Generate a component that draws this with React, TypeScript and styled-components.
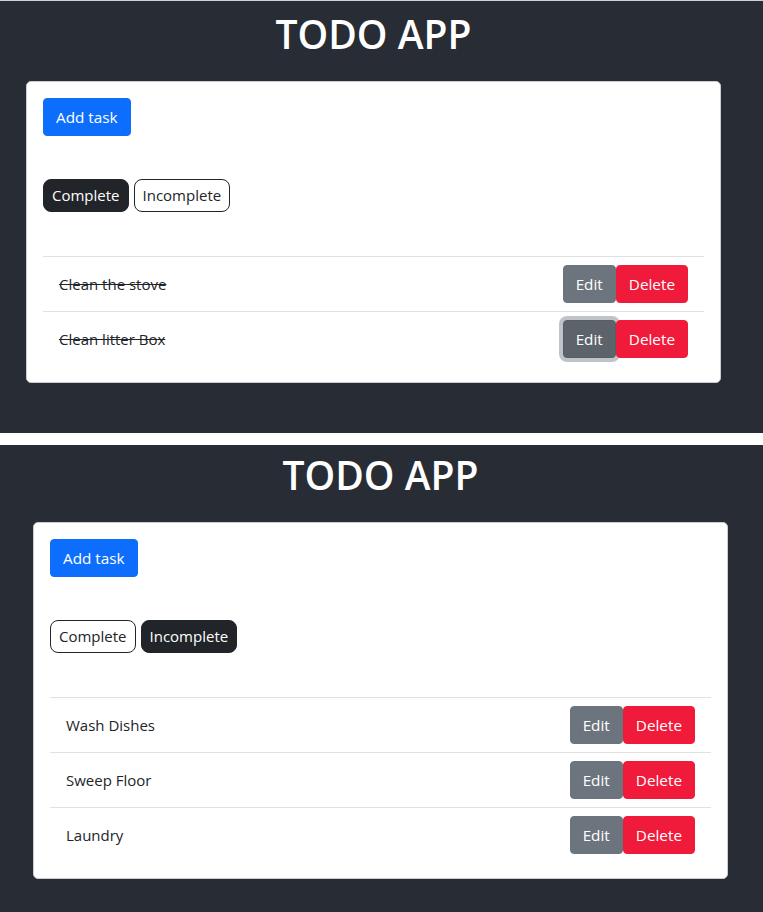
import React from "react";
import styled, { createGlobalStyle, css } from "styled-components";

const GlobalStyle = createGlobalStyle`
  html, body {
    margin: 0;
    padding: 0;
    background: #ffffff;
  }
  body {
    font-family: "Open Sans", "Noto Sans", "Liberation Sans", sans-serif;
    -webkit-font-smoothing: antialiased;
  }
  * { box-sizing: border-box; }
`;

const Page = styled.div`
  display: flex;
  flex-direction: column;
  gap: 12px;
  height: 912px;
  overflow: hidden;
`;

const Panel = styled.section<{ $top: number; $bottom: number; $rule?: boolean }>`
  background: #282c34;
  padding-top: ${(p) => p.$top}px;
  padding-bottom: ${(p) => p.$bottom}px;
  ${(p) =>
    p.$rule &&
    css`
      border-top: 1px solid #cfd3d8;
    `}
`;

const Container = styled.div<{ $left: number }>`
  width: 695px;
  margin-left: ${(p) => p.$left}px;
`;

const Title = styled.h1`
  margin: 0 0 23px;
  text-align: center;
  color: #ffffff;
  font-size: 39px;
  line-height: 48px;
  font-weight: 600;
  letter-spacing: 0;
`;

const Card = styled.div`
  background: #ffffff;
  border: 1px solid #c9ccd0;
  border-radius: 5px;
  padding: 16px;
  display: flex;
  flex-direction: column;
  align-items: flex-start;
`;

const BaseButton = styled.button`
  font-family: inherit;
  font-size: 15.3px;
  line-height: 24px;
  border: 1px solid transparent;
  cursor: pointer;
  color: #ffffff;
`;

const AddButton = styled(BaseButton)`
  background: #0d6efd;
  border-color: #0d6efd;
  padding: 6px 12px;
  border-radius: 4px;
`;

const FilterGroup = styled.div`
  display: flex;
  gap: 5px;
  margin-top: 43px;
`;

const FilterButton = styled(BaseButton)<{ $active: boolean }>`
  font-size: 15px;
  padding: 4px 8px;
  line-height: 23px;
  border-radius: 8px;
  border-color: #212529;
  background: ${(p) => (p.$active ? "#212529" : "#ffffff")};
  color: ${(p) => (p.$active ? "#ffffff" : "#212529")};
`;

const TaskList = styled.ul`
  list-style: none;
  margin: 44px 0 0;
  padding: 0;
  align-self: stretch;
`;

const TaskRow = styled.li`
  display: flex;
  align-items: center;
  justify-content: space-between;
  padding: 8px 16px;
  border-top: 1px solid #dee2e6;
`;

const TaskName = styled.span<{ $done: boolean }>`
  font-size: 15px;
  color: #212529;
  text-decoration: ${(p) => (p.$done ? "line-through" : "none")};
`;

const Actions = styled.div`
  display: flex;
`;

const ActionButton = styled(BaseButton)<{ $variant: "edit" | "delete"; $focused?: boolean }>`
  padding: 6px 12px;
  border-radius: 4px;
  ${(p) =>
    p.$variant === "edit"
      ? css`
          background: ${p.$focused ? "#5c636a" : "#6c757d"};
          border-color: ${p.$focused ? "#565e64" : "#6c757d"};
          ${p.$focused &&
          css`
            box-shadow: 0 0 0 4px rgba(130, 138, 145, 0.5);
            position: relative;
          `}
        `
      : css`
          background: #f01a3b;
          border-color: #f01a3b;
          position: relative;
          z-index: 1;
        `}
`;

type Task = { name: string; done: boolean; focused?: boolean };

const TodoPanel: React.FC<{
  left: number;
  top: number;
  bottom: number;
  rule?: boolean;
  showComplete: boolean;
  tasks: Task[];
}> = ({ left, top, bottom, rule, showComplete, tasks }) => (
  <Panel $top={top} $bottom={bottom} $rule={rule}>
    <Container $left={left}>
      <Title>TODO APP</Title>
      <Card>
        <AddButton>Add task</AddButton>
        <FilterGroup>
          <FilterButton $active={showComplete}>Complete</FilterButton>
          <FilterButton $active={!showComplete}>Incomplete</FilterButton>
        </FilterGroup>
        <TaskList>
          {tasks.map((t) => (
            <TaskRow key={t.name}>
              <TaskName $done={t.done}>{t.name}</TaskName>
              <Actions>
                <ActionButton $variant="edit" $focused={t.focused}>
                  Edit
                </ActionButton>
                <ActionButton $variant="delete">Delete</ActionButton>
              </Actions>
            </TaskRow>
          ))}
        </TaskList>
      </Card>
    </Container>
  </Panel>
);

export default function App() {
  return (
    <>
      <GlobalStyle />
      <Page>
        <TodoPanel
          left={26}
          top={9}
          bottom={50}
          rule
          showComplete
          tasks={[
            { name: "Clean the stove", done: true },
            { name: "Clean litter Box", done: true, focused: true },
          ]}
        />
        <TodoPanel
          left={33}
          top={6}
          bottom={40}
          showComplete={false}
          tasks={[
            { name: "Wash Dishes", done: false },
            { name: "Sweep Floor", done: false },
            { name: "Laundry", done: false },
          ]}
        />
      </Page>
    </>
  );
}
